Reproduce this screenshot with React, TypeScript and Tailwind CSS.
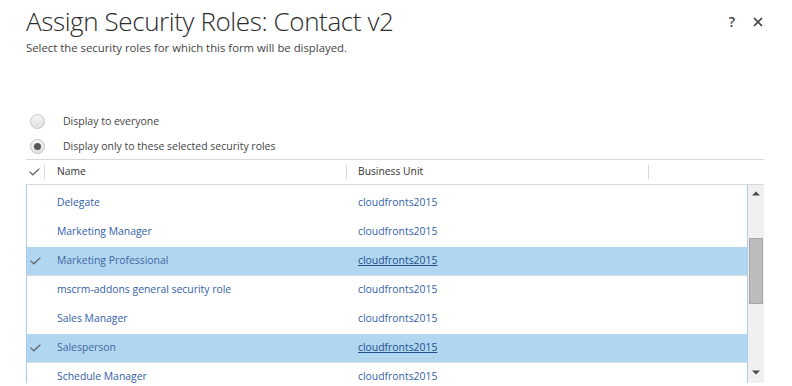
import React from "react";

const rows = [
  { name: "Delegate", sel: false },
  { name: "Marketing Manager", sel: false },
  { name: "Marketing Professional", sel: true },
  { name: "mscrm-addons general security role", sel: false },
  { name: "Sales Manager", sel: false },
  { name: "Salesperson", sel: true },
  { name: "Schedule Manager", sel: false },
];

function Check({ className = "" }: { className?: string }) {
  return (
    <svg width="11" height="8" viewBox="0 0 11 8" className={className}>
      <path d="M0.6 3.6 L3.8 6.8 L10.4 0.6" fill="none" stroke="#5f5f5f" strokeWidth="1.2" />
    </svg>
  );
}

function Radio({ checked }: { checked?: boolean }) {
  return (
    <div className="w-[15px] h-[15px] rounded-full border border-[#c3c3c3] bg-gradient-to-b from-[#f4f4f4] to-[#e2e2e2] flex items-center justify-center">
      {checked && <div className="w-[7px] h-[7px] rounded-full bg-[#555555]" />}
    </div>
  );
}

export default function App() {
  return (
    <div className="w-[792px] h-[386px] bg-white overflow-hidden relative" style={{ fontFamily: '"Open Sans", "Segoe UI", sans-serif' }}>
      <div className="absolute right-[29px] top-[13px] flex items-center gap-[18px] text-[#3c3c3c]">
        <span className="text-[14px] font-semibold leading-[18px]">?</span>
        <svg width="10" height="10" viewBox="0 0 10 10">
          <path d="M1 1 L9 9 M9 1 L1 9" stroke="#3c3c3c" strokeWidth="1.7" />
        </svg>
      </div>
      <div className="pl-[26px] pt-[4px]">
        <div className="text-[26px] font-light leading-[34px] text-[#2b2b2b] tracking-[-0.4px]">Assign Security Roles: Contact v2</div>
        <div className="mt-[2px] text-[11.35px] leading-[16px] text-[#444444]">Select the security roles for which this form will be displayed.</div>
      </div>
      <div className="mt-[53px] pl-[30px] text-[10.5px] text-[#444444]">
        <div className="h-[25px] flex items-center">
          <Radio />
          <span className="ml-[18px]">Display to everyone</span>
        </div>
        <div className="h-[25px] flex items-center">
          <Radio checked />
          <span className="ml-[18px]">Display only to these selected security roles</span>
        </div>
      </div>
      <div className="ml-[26px] w-[738px]">
        <div className="h-[26px] border-t border-b border-[#d8d8d8] flex items-center text-[10.3px] text-[#333333]">
          <div className="w-[18px] flex justify-start pl-[3px]">
            <Check />
          </div>
          <div className="w-px h-[14px] bg-[#d8d8d8]" />
          <div className="w-[301px] pl-[12px]">Name</div>
          <div className="w-px h-[14px] bg-[#d8d8d8]" />
          <div className="w-[301px] pl-[11px]">Business Unit</div>
          <div className="w-px h-[14px] bg-[#d8d8d8]" />
        </div>
        <div className="h-[198px] flex border-l border-[#a9cbf5]">
          <div className="flex-1 pt-[4px] overflow-hidden text-[10.4px]">
            {rows.map((r) => (
              <div
                key={r.name}
                className={`h-[29px] flex items-center border-b ${r.sel ? "bg-[#b1d6f0] border-[#d7dde2]" : "border-transparent"}`}
              >
                <div className="w-[30px] flex justify-start pl-[3px]">{r.sel && <Check />}</div>
                <div className={`w-[301px] ${r.sel ? "text-[#3f67a3]" : "text-[#3361a8]"}`}>{r.name}</div>
                <div className={r.sel ? "text-[#22508f] underline" : "text-[#3361a8]"}>cloudfronts2015</div>
              </div>
            ))}
          </div>
          <div className="w-[17px] border-l border-[#a9cbf5] bg-[#f0f0f0] flex flex-col items-center">
            <svg width="8" height="5" viewBox="0 0 8 5" className="mt-[6px]">
              <path d="M0 4.5 L4 0.5 L8 4.5 Z" fill="#4a4a4a" />
            </svg>
            <div className="mt-[42px] w-[14px] h-[66px] bg-[#bcbcbc] border border-[#a6a6a6]" />
            <div className="flex-1" />
            <svg width="8" height="5" viewBox="0 0 8 5" className="mb-[8px]">
              <path d="M0 0.5 L4 4.5 L8 0.5 Z" fill="#4a4a4a" />
            </svg>
          </div>
        </div>
      </div>
    </div>
  );
}
